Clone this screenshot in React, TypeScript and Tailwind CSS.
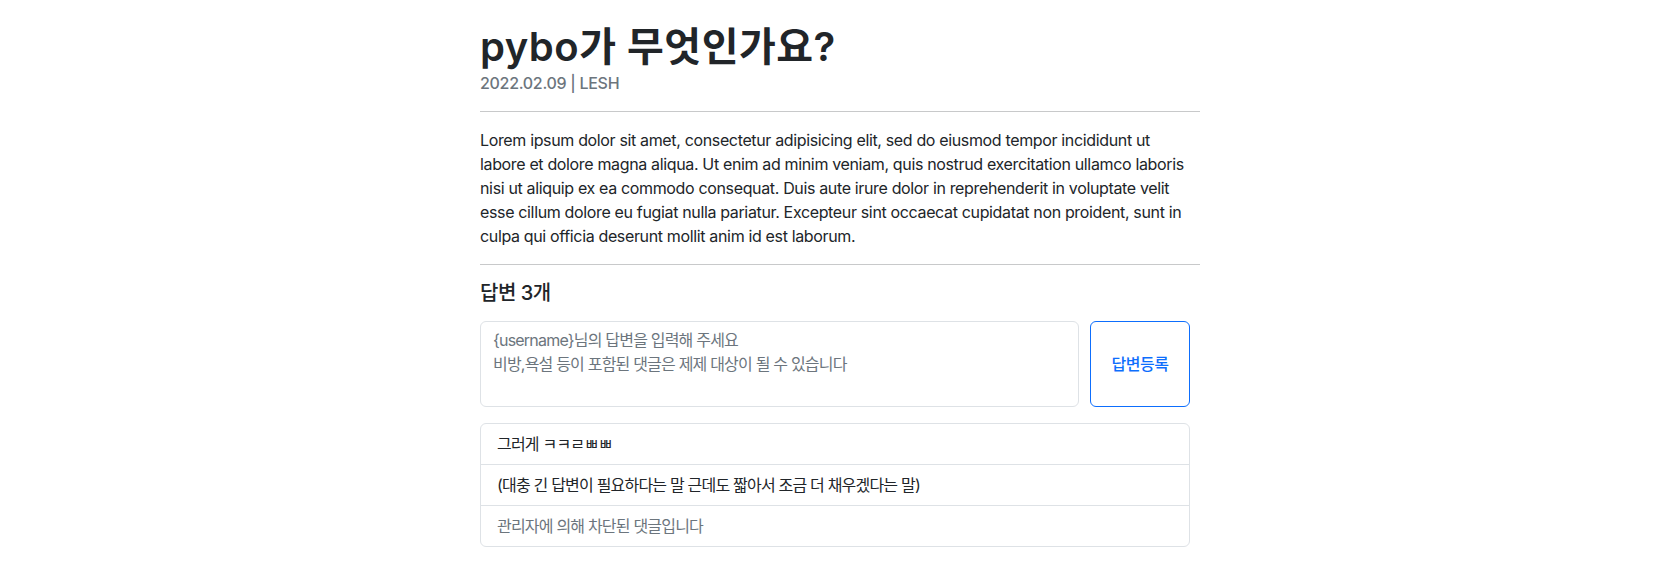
import React from "react";

export default function App() {
  const font = "font-[Inter,'Noto_Sans_CJK_KR',sans-serif]";
  return (
    <div className={`min-h-[587px] bg-white text-[#212529] ${font}`}>
      <div className="mx-auto w-[720px] pt-[23px]">
        <h1 className="text-[40px] leading-[48px] font-semibold tracking-[0.5px]">pybo가 무엇인가요?</h1>
        <div className="text-base leading-6 font-medium tracking-[-0.3px] text-[#6c757d]">2022.02.09 | LESH</div>
        <hr className="my-4 border-0 border-t border-[#c8c9ca]" />
        <p className="text-base leading-6 tracking-[-0.35px] whitespace-nowrap">
          Lorem ipsum dolor sit amet, consectetur adipisicing elit, sed do eiusmod tempor incididunt ut
          <br />
          labore et dolore magna aliqua. Ut enim ad minim veniam, quis nostrud exercitation ullamco laboris
          <br />
          nisi ut aliquip ex ea commodo consequat. Duis aute irure dolor in reprehenderit in voluptate velit
          <br />
          esse cillum dolore eu fugiat nulla pariatur. Excepteur sint occaecat cupidatat non proident, sunt in
          <br />
          culpa qui officia deserunt mollit anim id est laborum.
        </p>
        <hr className="my-4 border-0 border-t border-[#c8c9ca]" />
        <h5 className="text-[20px] leading-6 font-medium tracking-[-0.5px]">답변 3개</h5>
        <div className="mt-4 w-[710px]">
          <div className="flex gap-[11px]">
            <textarea
              rows={3}
              className={`h-[86px] flex-1 resize-none rounded-md border border-[#dee2e6] px-3 py-[6px] text-base leading-6 tracking-[-0.8px] outline-none placeholder:text-[#6c757d] ${font}`}
              placeholder={"{username}님의 답변을 입력해 주세요\n비방,욕설 등이 포함된 댓글은 제제 대상이 될 수 있습니다"}
            />
            <button
              className={`h-[86px] w-[100px] rounded-md border border-[#0d6efd] bg-white text-base font-medium tracking-[-0.5px] text-[#0d6efd] ${font}`}
            >
              답변등록
            </button>
          </div>
          <ul className="mt-4 rounded-md border border-[#dee2e6] tracking-[-0.8px]">
            <li className="px-4 py-2 text-base leading-6">그러게 ㅋㅋㄹㅃㅃ</li>
            <li className="border-t border-[#dee2e6] px-4 py-2 text-base leading-6">
              (대충 긴 답변이 필요하다는 말 근데도 짧아서 조금 더 채우겠다는 말)
            </li>
            <li className="border-t border-[#dee2e6] px-4 py-2 text-base leading-6 text-[#6c757d]">
              관리자에 의해 차단된 댓글입니다
            </li>
          </ul>
        </div>
      </div>
    </div>
  );
}
